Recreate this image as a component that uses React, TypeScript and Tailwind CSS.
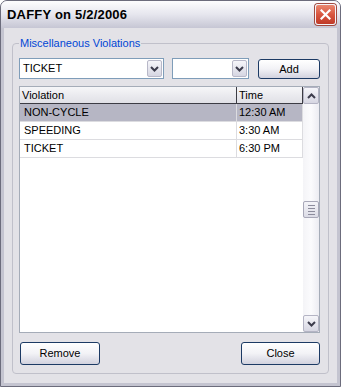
import React from 'react';

const ROWS = [
    { violation: 'NON-CYCLE', time: '12:30 AM', selected: true },
    { violation: 'SPEEDING', time: '3:30 AM', selected: false },
    { violation: 'TICKET', time: '6:30 PM', selected: false },
];

const Chevron = ({ up = false }: { up?: boolean }) => (
    <svg width="9" height="6" viewBox="0 0 9 6" className={up ? 'rotate-180' : ''}>
        <path d="M1 1 L4.5 4.5 L8 1" fill="none" stroke="#3c3c4c" strokeWidth="2" />
    </svg>
);

const DropButton = () => (
    <div className="w-[15px] h-[17px] m-[1px] ml-auto flex items-center justify-center rounded-[2px] border border-[#b8b8c8] bg-gradient-to-b from-[#f6f6fa] to-[#d6d6e2]">
        <Chevron />
    </div>
);

const XPButton = ({ label, className }: { label: string; className: string }) => (
    <button className={`${className} flex items-center justify-center rounded-[3px] border border-[#1c3a64] bg-gradient-to-b from-white via-[#f2f2f6] to-[#d2d2de] text-[11px] text-black`}>
        {label}
    </button>
);

const App: React.FC = () => {
    return (
        <div className="w-[341px] h-[387px] flex flex-col bg-[#c4c4d0] border border-[#6c6c7c] rounded-t-[7px] overflow-hidden font-['Liberation_Sans',Arial,sans-serif]">
            {/* Title bar */}
            <div className="h-[27px] shrink-0 flex items-center justify-between pl-[6px] pr-[4px] bg-gradient-to-b from-[#fdfdfe] via-[#e6e6ee] to-[#c6c6d4]">
                <span className="text-[13px] font-bold text-black tracking-[0.2px]">DAFFY on 5/2/2006</span>
                <div className="w-[21px] h-[21px] flex items-center justify-center rounded-[3px] border border-[#f4f4f8] bg-gradient-to-b from-[#ea8870] via-[#d85640] to-[#c03a28] shadow-[0_0_0_1px_#a04a40]">
                    <svg width="11" height="11" viewBox="0 0 11 11">
                        <path d="M1.5 1.5 L9.5 9.5 M9.5 1.5 L1.5 9.5" stroke="white" strokeWidth="2.2" strokeLinecap="square" />
                    </svg>
                </div>
            </div>

            {/* Client area */}
            <div className="flex-1 flex px-[3px] pb-[3px]">
                <div className="flex-1 flex bg-[#e3e2e7] pt-[9px] pl-[8px] pr-[8px] pb-[9px]">
                    <fieldset className="flex-1 flex flex-col border border-[#c0c0ca] rounded-[4px] pl-[6px] pr-[7px] pb-[8px]">
                        <legend className="px-[1px] text-[11px] leading-[13px] text-[#0046d5]">Miscellaneous Violations</legend>

                        {/* Combo row */}
                        <div className="mt-[8px] flex items-start text-[11px] text-black">
                            <div className="w-[145px] h-[21px] flex items-center border border-[#7f9db9] bg-white">
                                <span className="pl-[3px]">TICKET</span>
                                <DropButton />
                            </div>
                            <div className="ml-[8px] w-[77px] h-[21px] flex items-center border border-[#7f9db9] bg-white">
                                <DropButton />
                            </div>
                            <XPButton label="Add" className="ml-[9px] mt-[1px] w-[62px] h-[20px]" />
                        </div>

                        {/* List view */}
                        <div className="mt-[7px] w-[301px] h-[247px] flex border border-[#a5acb8] bg-white text-[11px] text-black">
                            <div className="flex-1 flex flex-col">
                                <div className="h-[17px] flex bg-gradient-to-b from-[#f6f6f8] to-[#e0e0e6] border-b border-[#3c3c44]">
                                    <div className="w-[217px] flex items-center pl-[2px] border-r border-[#3c3c44]">Violation</div>
                                    <div className="flex-1 flex items-center pl-[2px] border-r border-[#3c3c44]">Time</div>
                                </div>
                                {ROWS.map((row) => (
                                    <div
                                        key={row.violation}
                                        className={`h-[18px] flex border-b border-[#dcdce0] ${row.selected ? 'bg-[#b6b6c4]' : ''}`}
                                    >
                                        <div className="w-[217px] flex items-center pl-[4px] border-r border-[#dcdce0]">{row.violation}</div>
                                        <div className="flex-1 flex items-center pl-[2px] border-r border-[#dcdce0]">{row.time}</div>
                                    </div>
                                ))}
                            </div>

                            {/* Scrollbar */}
                            <div className="w-[16px] flex flex-col bg-gradient-to-r from-[#f4f4f7] via-[#fbfbfd] to-[#ececf2]">
                                <div className="h-[17px] flex items-center justify-center rounded-[2px] border border-[#b4b4c4] bg-gradient-to-b from-[#f6f6fa] to-[#d6d6e2]">
                                    <Chevron up />
                                </div>
                                <div className="h-[97px]" />
                                <div className="h-[17px] flex flex-col items-center justify-center gap-[2px] rounded-[2px] border border-[#a8a8b8] bg-gradient-to-b from-[#f4f4f8] to-[#dcdce6]">
                                    <div className="w-[7px] h-px bg-[#8c8c9c]" />
                                    <div className="w-[7px] h-px bg-[#8c8c9c]" />
                                    <div className="w-[7px] h-px bg-[#8c8c9c]" />
                                    <div className="w-[7px] h-px bg-[#8c8c9c]" />
                                </div>
                                <div className="flex-1" />
                                <div className="h-[17px] flex items-center justify-center rounded-[2px] border border-[#b4b4c4] bg-gradient-to-b from-[#f6f6fa] to-[#d6d6e2]">
                                    <Chevron />
                                </div>
                            </div>
                        </div>

                        {/* Bottom buttons */}
                        <div className="mt-[9px] w-[301px] flex justify-between">
                            <XPButton label="Remove" className="ml-[1px] w-[80px] h-[23px]" />
                            <XPButton label="Close" className="w-[79px] h-[23px]" />
                        </div>
                    </fieldset>
                </div>
            </div>
        </div>
    );
};

export default App;
